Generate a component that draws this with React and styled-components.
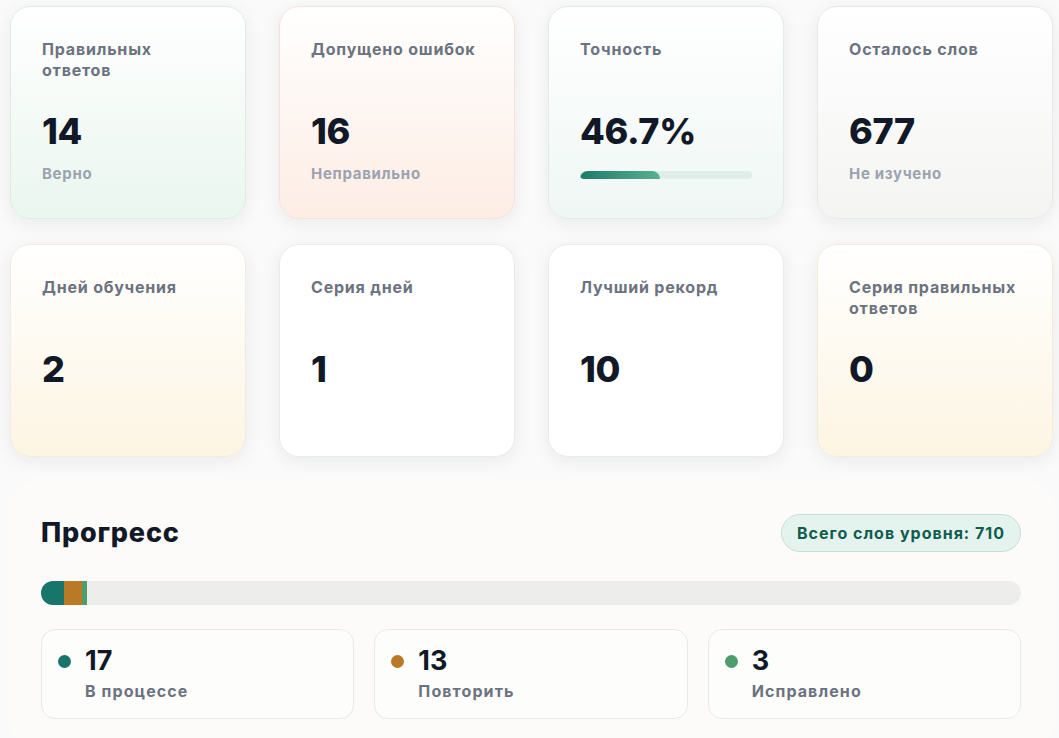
import React from 'react'
import styled, { createGlobalStyle } from 'styled-components'

const GlobalStyle = createGlobalStyle`
  * { box-sizing: border-box; }
  body {
    margin: 0;
    background: #fafafa;
    font-family: 'Inter', 'Noto Sans', sans-serif;
    -webkit-font-smoothing: antialiased;
  }
`

const tones = {
	green: { bg: 'linear-gradient(180deg, #ffffff 0%, #eaf6ef 100%)', border: '#dcede5' },
	peach: { bg: 'linear-gradient(180deg, #ffffff 0%, #fdede4 100%)', border: '#f5e2da' },
	mint: { bg: 'linear-gradient(180deg, #ffffff 0%, #eff7f4 100%)', border: '#dfece8' },
	gray: { bg: 'linear-gradient(180deg, #ffffff 0%, #f4f4f3 100%)', border: '#e8e8e6' },
	cream: { bg: 'linear-gradient(180deg, #ffffff 0%, #fdf5e3 100%)', border: '#f3ebdc' },
	white: { bg: '#ffffff', border: '#ebebea' },
}

const stats = [
	{ title: 'Правильных ответов', value: '14', sub: 'Верно', tone: 'green' },
	{ title: 'Допущено ошибок', value: '16', sub: 'Неправильно', tone: 'peach' },
	{ title: 'Точность', value: '46.7%', bar: 46.7, tone: 'mint' },
	{ title: 'Осталось слов', value: '677', sub: 'Не изучено', tone: 'gray' },
	{ title: 'Дней обучения', value: '2', tone: 'cream' },
	{ title: 'Серия дней', value: '1', tone: 'white' },
	{ title: 'Лучший рекорд', value: '10', tone: 'white' },
	{ title: 'Серия правильных ответов', value: '0', tone: 'cream' },
]

const total = 710
const progress = [
	{ value: 17, label: 'В процессе', color: '#17756a' },
	{ value: 13, label: 'Повторить', color: '#b87a27' },
	{ value: 3, label: 'Исправлено', color: '#4f9d6d' },
]

export default function App() {
	return (
		<>
			<GlobalStyle />
			<Page>
				<CardGrid>
					{stats.map((s) => (
						<Card key={s.title} $tone={s.tone}>
							<CardTitle>{s.title}</CardTitle>
							<CardValue>{s.value}</CardValue>
							{s.sub && <CardSub>{s.sub}</CardSub>}
							{s.bar !== undefined && (
								<Track>
									<Fill style={{ width: `${s.bar}%` }} />
								</Track>
							)}
						</Card>
					))}
				</CardGrid>

				<Panel>
					<PanelHeader>
						<PanelTitle>Прогресс</PanelTitle>
						<Badge>Всего слов уровня: {total}</Badge>
					</PanelHeader>
					<StackBar>
						{progress.map((p) => (
							<Segment key={p.label} $color={p.color} style={{ width: `${(p.value / total) * 100}%` }} />
						))}
					</StackBar>
					<StatRow>
						{progress.map((p) => (
							<StatBox key={p.label}>
								<Dot $color={p.color} />
								<StatText>
									<StatNumber>{p.value}</StatNumber>
									<StatLabel>{p.label}</StatLabel>
								</StatText>
							</StatBox>
						))}
					</StatRow>
				</Panel>
			</Page>
		</>
	)
}

const Page = styled.div`
  width: 1047px;
  margin-left: 8px;
  padding-top: 6px;
`

const CardGrid = styled.div`
  display: grid;
  grid-template-columns: repeat(4, 236px);
  grid-auto-rows: 213px;
  column-gap: 33px;
  row-gap: 25px;
  padding: 0 2px;
`

const Card = styled.div`
  background: ${({ $tone }) => tones[$tone].bg};
  border: 1px solid ${({ $tone }) => tones[$tone].border};
  border-radius: 20px;
  box-shadow: 0 4px 18px rgba(17, 24, 39, 0.07);
  padding: 32px 31px;
  display: flex;
  flex-direction: column;
`

const CardTitle = styled.div`
  font-size: 16px;
  font-weight: 700;
  letter-spacing: 0.8px;
  line-height: 21px;
  min-height: 42px;
  color: #6b7280;
`

const CardValue = styled.div`
  margin-top: 28px;
  font-size: 36px;
  font-weight: 800;
  line-height: 44px;
  color: #111827;
  letter-spacing: -0.3px;
`

const CardSub = styled.div`
  margin-top: 11px;
  font-size: 15px;
  font-weight: 700;
  letter-spacing: 0.7px;
  line-height: 20px;
  color: #9ca3af;
`

const Track = styled.div`
  margin-top: 18px;
  height: 8px;
  width: 172px;
  border-radius: 999px;
  background: #dfeee9;
  overflow: hidden;
`

const Fill = styled.div`
  height: 16px;
  border-radius: 8px;
  background: linear-gradient(90deg, #1d7c67 0%, #58b092 100%);
`

const Panel = styled.div`
  margin-top: 25px;
  background: #fcfbf9;
  border-radius: 24px;
  padding: 32px 34px 24px 33px;
`

const PanelHeader = styled.div`
  display: flex;
  align-items: center;
  justify-content: space-between;
`

const PanelTitle = styled.h2`
  margin: 0;
  font-size: 27px;
  font-weight: 800;
  letter-spacing: 0.8px;
  line-height: 36px;
  color: #111827;
`

const Badge = styled.div`
  height: 38px;
  display: flex;
  align-items: center;
  padding: 0 15px;
  border-radius: 999px;
  background: #e5f3ef;
  border: 1px solid #c3e1d7;
  color: #0f5c4d;
  font-size: 16px;
  font-weight: 700;
  letter-spacing: 1px;
`

const StackBar = styled.div`
  margin-top: 29px;
  height: 24px;
  border-radius: 999px;
  background: #ededeb;
  display: flex;
  overflow: hidden;
`

const Segment = styled.div`
  height: 100%;
  background: ${({ $color }) => $color};
`

const StatRow = styled.div`
  margin-top: 24px;
  display: grid;
  grid-template-columns: repeat(3, 1fr);
  gap: 20px;
`

const StatBox = styled.div`
  height: 90px;
  background: #fdfdfc;
  border: 1px solid #e9e9e7;
  border-radius: 14px;
  padding: 15px 16px;
  display: flex;
  gap: 14px;
`

const Dot = styled.span`
  flex: none;
  width: 13px;
  height: 13px;
  margin-top: 10px;
  border-radius: 50%;
  background: ${({ $color }) => $color};
`

const StatText = styled.div`
  display: flex;
  flex-direction: column;
`

const StatNumber = styled.div`
  font-size: 27px;
  font-weight: 700;
  line-height: 32px;
  color: #111827;
`

const StatLabel = styled.div`
  margin-top: 4px;
  font-size: 16px;
  font-weight: 700;
  letter-spacing: 1.1px;
  line-height: 20px;
  color: #6b7280;
`
